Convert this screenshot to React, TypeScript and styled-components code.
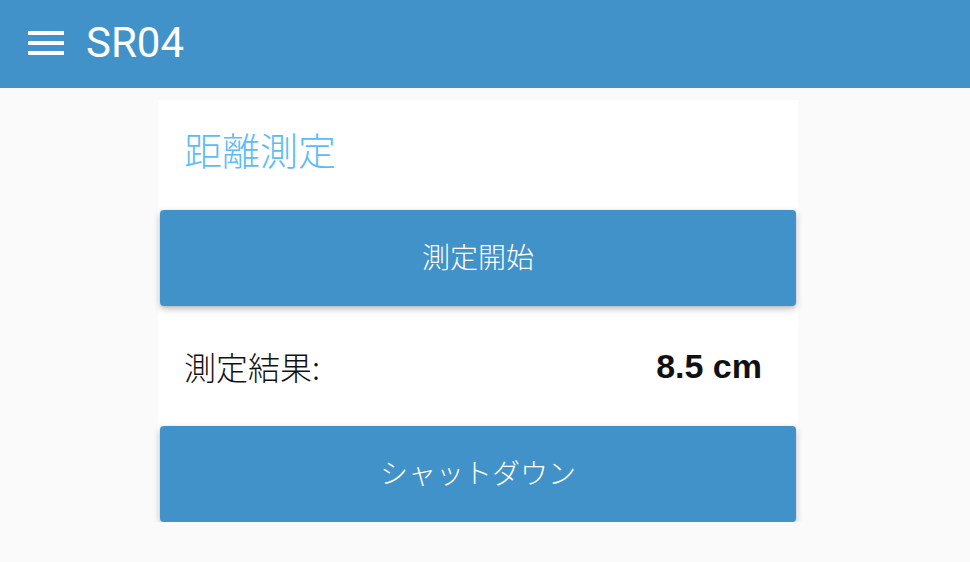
import React from 'react'
import styled, { createGlobalStyle } from 'styled-components'

const GlobalStyle = createGlobalStyle`
  html, body {
    margin: 0;
    padding: 0;
    background: #fafafa;
    font-family: Roboto, "Noto Sans CJK JP", sans-serif;
  }
`

const TopBar = styled.header`
  height: 88px;
  background: #4192c9;
  display: flex;
  align-items: center;
  padding: 0 28px;
  gap: 22px;
  color: #fff;
`

const MenuIcon = styled.div`
  width: 36px;
  display: flex;
  flex-direction: column;
  gap: 6px;
  margin-top: -2px;

  span {
    display: block;
    height: 4px;
    background: #fff;
  }
`

const Title = styled.h1`
  margin: 0;
  font-family: Roboto, sans-serif;
  font-weight: 400;
  font-size: 42px;
  line-height: 1;
  margin-top: -2px;
`

const Card = styled.main`
  width: 636px;
  margin: 12px 0 0 158px;
  padding: 0 2px;
  background: #fff;
`

const Heading = styled.h2`
  margin: 0;
  height: 110px;
  box-sizing: border-box;
  padding: 29px 0 0 24px;
  font-family: "Noto Sans CJK JP", sans-serif;
  font-weight: 300;
  font-size: 38px;
  line-height: 40px;
  color: #5cbcf6;
`

const ActionButton = styled.button`
  display: block;
  width: 100%;
  height: 96px;
  padding: 0 0 5px;
  border: none;
  border-radius: 4px;
  background: #4192c9;
  color: #fff;
  font-family: "Noto Sans CJK JP", sans-serif;
  font-weight: 300;
  font-size: 28px;
  box-shadow: 0 3px 7px rgba(0, 0, 0, 0.24), 0 1px 3px rgba(0, 0, 0, 0.1);
  cursor: pointer;
`

const ResultRow = styled.div`
  height: 120px;
  display: flex;
  align-items: center;
  justify-content: space-between;
  padding: 0 34px 0 24px;
`

const ResultLabel = styled.span`
  font-family: "Noto Sans CJK JP", sans-serif;
  font-weight: 300;
  font-size: 32px;
  color: #111;
`

const ResultValue = styled.span`
  font-family: "Liberation Sans", Arial, sans-serif;
  font-weight: 700;
  font-size: 34px;
  color: #111;
`

export default function App() {
  return (
    <>
      <GlobalStyle />
      <TopBar>
        <MenuIcon>
          <span />
          <span />
          <span />
        </MenuIcon>
        <Title>SR04</Title>
      </TopBar>
      <Card>
        <Heading>距離測定</Heading>
        <ActionButton>測定開始</ActionButton>
        <ResultRow>
          <ResultLabel>測定結果:</ResultLabel>
          <ResultValue>8.5 cm</ResultValue>
        </ResultRow>
        <ActionButton>シャットダウン</ActionButton>
      </Card>
    </>
  )
}
